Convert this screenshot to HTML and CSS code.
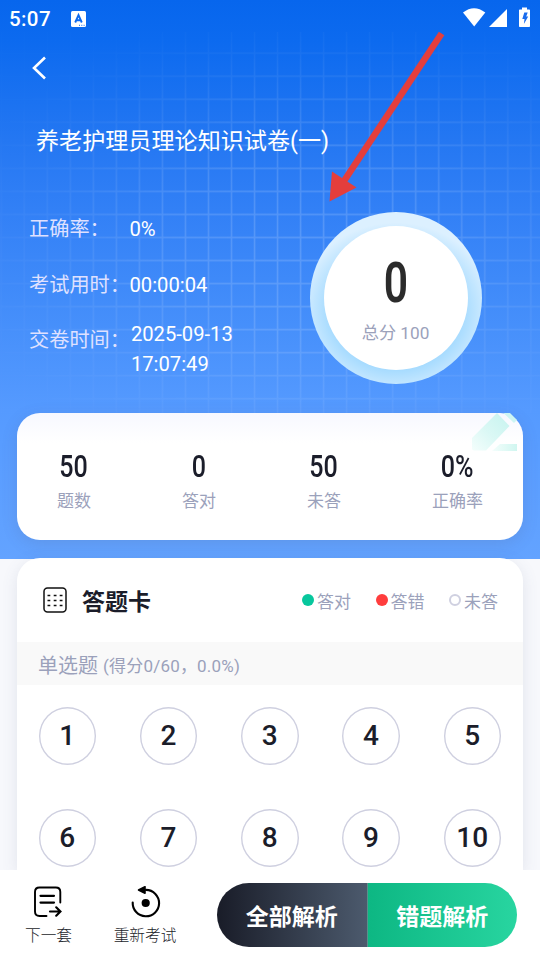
FILE: index.html
```html
<!DOCTYPE html>
<html lang="zh-CN">
<head>
<meta charset="utf-8">
<title>答题结果</title>
<link rel="stylesheet" href="styles.css">
</head>
<body>
<div class="screen">
  <div class="hero-bg">
    <svg class="grid" width="540" height="413"><defs><pattern id="cell" x="-.3" y="6.300" width="23.030" height="23.030" patternUnits="userSpaceOnUse"><path d="M1.500 0V23.030M0 .8H23.030" stroke="#fff" stroke-opacity=".17" stroke-width="1.600"/></pattern></defs><rect y="32" width="540" height="381" fill="url(#cell)"/></svg>
  </div>

  <header class="status">
    <span class="clock">5:07</span>
    <svg class="ime" width="15" height="16" viewBox="0 0 15 16"><rect width="15" height="16" rx="1.500" fill="#fff"/><path d="M4.200 11.500L7.500 4L10.800 11.500M5.500 9.300H9.500" fill="none" stroke="#0d69ee" stroke-width="1.900"/><path d="M8 14.300h1M10.300 14.300h1M12.600 14.300h1" stroke="#0d69ee"/></svg>
    <svg class="signals" width="70" height="22" viewBox="0 0 70 22"><path d="M1 5.500Q12 -3 23.300 5.500L12.200 19.500Z" fill="#fff"/><path d="M45 2V20H27Z" fill="#fff"/><path d="M60 .5h5v2h2.200a.8.800 0 0 1 .8.800v16a.8.800 0 0 1-.8.800h-9.400a.8.800 0 0 1-.8-.8v-16a.8.800 0 0 1 .8-.8H60Z" fill="#fff"/><path d="M62.300 5.500h3.400l-1.500 4h2l-4.300 7.500.6-5h-2.200Z" fill="#1a6cee"/></svg>
  </header>

  <nav class="nav"><svg width="16" height="24" viewBox="0 0 16 24"><path d="M13 1.500L2 12L13 22.500" fill="none" stroke="#fff" stroke-width="2.600"/></svg></nav>

  <h1 class="title">养老护理员理论知识试卷(一)</h1>

  <section class="summary">
    <dl class="facts">
      <div class="fact"><dt>正确率：</dt><dd>0%</dd></div>
      <div class="fact"><dt>考试用时：</dt><dd>00:00:04</dd></div>
      <div class="fact two"><dt>交卷时间：</dt><dd>2025-09-13<br>17:07:49</dd></div>
    </dl>
    <div class="ring"><div class="disc"><span class="score">0</span><span class="total">总分 100</span></div></div>
  </section>

  <section class="stats">
    <svg class="pencil" width="50" height="40" viewBox="0 0 50 40">
      <defs><linearGradient id="pg" x1="0" y1="1" x2="1" y2="0"><stop offset="0" stop-color="#f4fefc"/><stop offset=".45" stop-color="#dbf8f5"/><stop offset="1" stop-color="#c6f3ef"/></linearGradient><linearGradient id="pb"><stop offset="0" stop-color="#f4fefc"/><stop offset="1" stop-color="#d0f6f0"/></linearGradient></defs>
      <path d="M25 0L37.500 13L14 37.500H2Q0 37.500 0 35.500V25Z" fill="url(#pg)"/><path d="M31.500 0H38L45 7L42 10Z" fill="#cdf5f3"/><path d="M28 31H45V38H20Z" fill="url(#pb)"/>
    </svg>
    <div class="stat"><b>50</b><span>题数</span></div>
    <div class="stat"><b>0</b><span>答对</span></div>
    <div class="stat"><b>50</b><span>未答</span></div>
    <div class="stat"><b>0%</b><span>正确率</span></div>
  </section>

  <main class="sheet">
    <div class="sheet-head">
      <svg width="24" height="26" viewBox="0 0 24 26"><rect x="1" y=".9" width="22" height="24.200" rx="3.500" fill="none" stroke="#111" stroke-width="1.500"/><path d="M4.500 8.500h2.800M10.700 8.500h2.800M16.700 8.500h2.800M4.500 13.500h2.800M10.700 13.500h2.800M16.700 13.500h2.800M4.500 18.500h2.800M10.700 18.500h2.800M16.700 18.500h2.800" stroke="#111" stroke-width="1.600"/></svg>
      <h2>答题卡</h2>
      <ul class="legend">
        <li><i class="dot right"></i>答对</li>
        <li><i class="dot wrong"></i>答错</li>
        <li><i class="dot none"></i>未答</li>
      </ul>
    </div>
    <div class="section-name"><span>单选题</span><small>(得分0/60，0.0%)</small></div>
    <div class="numbers">
      <span>1</span><span>2</span><span>3</span><span>4</span><span>5</span>
      <span>6</span><span>7</span><span>8</span><span>9</span><span>10</span>
    </div>
  </main>

  <footer class="bar">
    <div class="action next">
      <svg width="28" height="32" viewBox="0 0 28 32"><path d="M26.300 16.500V6Q26.300 1.500 21.800 1.500H5.500Q1 1.500 1 6V25.500Q1 30 5.500 30H12.500" fill="none" stroke="#000" stroke-width="1.900" stroke-linecap="round"/><path d="M6.500 9.800H20M6.500 16.600H20" stroke="#000" stroke-width="2.200" stroke-linecap="round"/><path d="M16 25.500H26M22.200 21.300L26.400 25.500L22.200 29.700" fill="none" stroke="#000" stroke-width="2.200" stroke-linecap="round"/></svg>
      <span>下一套</span>
    </div>
    <div class="action again">
      <svg width="30" height="32" viewBox="0 0 30 32"><path d="M1.700 16.500A13.200 13.200 0 1 0 15 3.900" fill="none" stroke="#000" stroke-width="2.100" stroke-linecap="round"/><path d="M7.500 4L14 .7V7.300Z" fill="#000" stroke="#000" stroke-width="1.600" stroke-linejoin="round"/><circle cx="14.700" cy="17" r="4.100" fill="#000"/></svg>
      <span>重新考试</span>
    </div>
    <div class="buttons"><a class="all">全部解析</a><a class="mistakes">错题解析</a></div>
  </footer>

  <svg class="arrow" width="130" height="180" viewBox="0 0 130 180"><path d="M112.600 2.500L15 150" stroke="#e43e3c" stroke-width="6.600" fill="none"/><path d="M.5 170.500L3 140.500L27.500 156.500Z" fill="#e43e3c"/></svg>
</div>
</body>
</html>
```
FILE: styles.css
```css
* { box-sizing: border-box; }
body, h1, h2, dl, dd, ul { margin: 0; padding: 0; }
body {
  font-family: Roboto, "Noto Sans CJK SC", sans-serif;
  color: #1b1d2a;
  background: #f7f8fc;
}
.screen {
  position: relative;
  display: flex;
  flex-direction: column;
  width: 540px;
  height: 960px;
  overflow: hidden;
  isolation: isolate;
}
.hero-bg {
  position: absolute;
  z-index: -1;
  inset: 0 0 auto;
  height: 559px;
  background: linear-gradient(#0766ed 0, #0c6aef 40px, #2477f2 140px, #3280f6 210px, #4790fb 330px, #559aff 410px, #63a3ff 559px);
}
.grid {
  display: block;
  -webkit-mask-image: radial-gradient(ellipse 350px 240px at 310px 240px, #000 0, rgba(0,0,0,.85) 40%, rgba(0,0,0,.25) 80%, rgba(0,0,0,.05));
  mask-image: radial-gradient(ellipse 350px 240px at 310px 240px, #000 0, rgba(0,0,0,.85) 40%, rgba(0,0,0,.25) 80%, rgba(0,0,0,.05));
}
.status {
  display: flex;
  align-items: center;
  height: 36px;
  padding: 1px 9px 0;
  color: #fff;
}
.clock { width: 62px; font-size: 20.500px; font-weight: 500; letter-spacing: .4px; }
.signals { margin: -2px -1px 0 auto; }
.nav { height: 64px; padding: 20px 0 0 32px; }
.nav svg { display: block; }
.title {
  height: 80px;
  padding-left: 36px;
  color: #fff;
  font-size: 23.100px;
  font-weight: 400;
  line-height: 83px;
}
.summary {
  display: flex;
  justify-content: space-between;
  height: 233px;
  padding: 32px 58px 0 29px;
}
.facts { padding-top: 2px; font-size: 20.200px; }
.fact { display: flex; height: 56px; line-height: 30px; white-space: nowrap; }
dt { width: 100.500px; color: #dfe1ff; }
dd { color: #fff; }
.two dt { margin-top: -1px; }
.two dd { margin: -7px 0 0 1.400px; }
.ring {
  width: 172px;
  height: 172px;
  padding: 14px;
  border-radius: 50%;
  background: radial-gradient(ellipse 78px 70px at 50% 57%, #a6dbff 85%, #dcf0ff 125%);
}
.disc {
  display: flex;
  flex-direction: column;
  align-items: center;
  height: 144px;
  border-radius: 50%;
  background: #fff;
}
.score {
  margin: 24px 0 0 -1px;
  color: #2b2b2b;
  font-size: 56px;
  font-weight: 600;
  line-height: 67px;
  transform: scaleX(.76);
}
.total { margin: 3px 0 0 -1px; color: #9ba1bb; font-size: 17.200px; line-height: 26px; }
.stats {
  position: relative;
  display: flex;
  justify-content: space-between;
  height: 127px;
  margin: 0 17px;
  padding: 35px 40px 0 40px;
  border-radius: 23px;
  background: linear-gradient(#f7f8ff, #fff 30px);
  box-shadow: 0 4px 16px rgba(80,90,120,.16);
}
.pencil { position: absolute; top: 0; right: 1px; }
.stat { display: flex; flex-direction: column; align-items: center; }
.stat b { font-size: 31px; font-weight: 500; line-height: 38px; margin: 0 -10px; transform: scaleX(.81); }
.stat span { color: #9ba1bb; font-size: 17px; line-height: 30px; }
.sheet {
  height: 312px;
  margin: 18px 17px 0;
  border-radius: 23px 23px 0 0;
  background: #fff;
  box-shadow: 0 4px 16px rgba(80,90,120,.13);
}
.sheet-head { display: flex; align-items: center; height: 84px; padding: 0 25px 0 26px; }
h2 { margin: 5px 0 0 15px; font-size: 23px; font-weight: 700; line-height: 34px; }
.legend {
  display: flex;
  gap: 24.500px;
  margin-left: auto;
  color: #9ba1bb;
  font-size: 17px;
  list-style: none;
}
.legend li { display: flex; align-items: center; gap: 3px; }
.dot { width: 12px; height: 12px; border-radius: 50%; }
.right { background: #07c79d; }
.wrong { background: #ff3d3d; }
.none { border: 2px solid #cfd0e0; }
.section-name {
  display: flex;
  align-items: center;
  gap: 5px;
  height: 43px;
  padding: 2px 0 0 21px;
  background: #f9f9f9;
  color: #9ba1bb;
  font-size: 20px;
}
small { font-size: 17px; letter-spacing: .2px; }
.numbers {
  display: grid;
  grid-template-columns: repeat(5, 58px);
  justify-content: space-between;
  row-gap: 44px;
  padding: 22px 21.500px 0 21.500px;
}
.numbers span {
  height: 58px;
  margin-right: .5px;
  border-radius: 50%;
  box-shadow: inset 0 0 0 1.400px #cfd0e0;
  font-size: 28px;
  font-weight: 500;
  line-height: 58px;
  text-align: center;
}
.bar {
  position: relative;
  display: flex;
  height: 90px;
  padding: 13px 23px 0 17px;
  background: #fff;
}
.action { display: flex; flex-direction: column; align-items: center; padding-top: 3px; font-size: 15.700px; font-weight: 300; }
.action span { margin-top: 6px; line-height: 24px; }
.action svg { margin-left: -1px; }
.again svg { margin-left: 1px; }
.next { width: 63px; }
.again { width: 130px; }
.buttons { display: flex; width: 300px; height: 64px; margin-left: auto; border-radius: 32px; overflow: hidden; }
.buttons a { flex: 1; color: #fff; font-size: 23px; font-weight: 700; line-height: 70px; text-align: center; }
.all { background: linear-gradient(90deg, #191c28, #4c5a6d); }
.mistakes { border-left: 1px solid #5b8f8c; background: linear-gradient(90deg, #0db783, #28d5a0); }
.arrow { position: absolute; top: 31px; left: 329px; }
```
